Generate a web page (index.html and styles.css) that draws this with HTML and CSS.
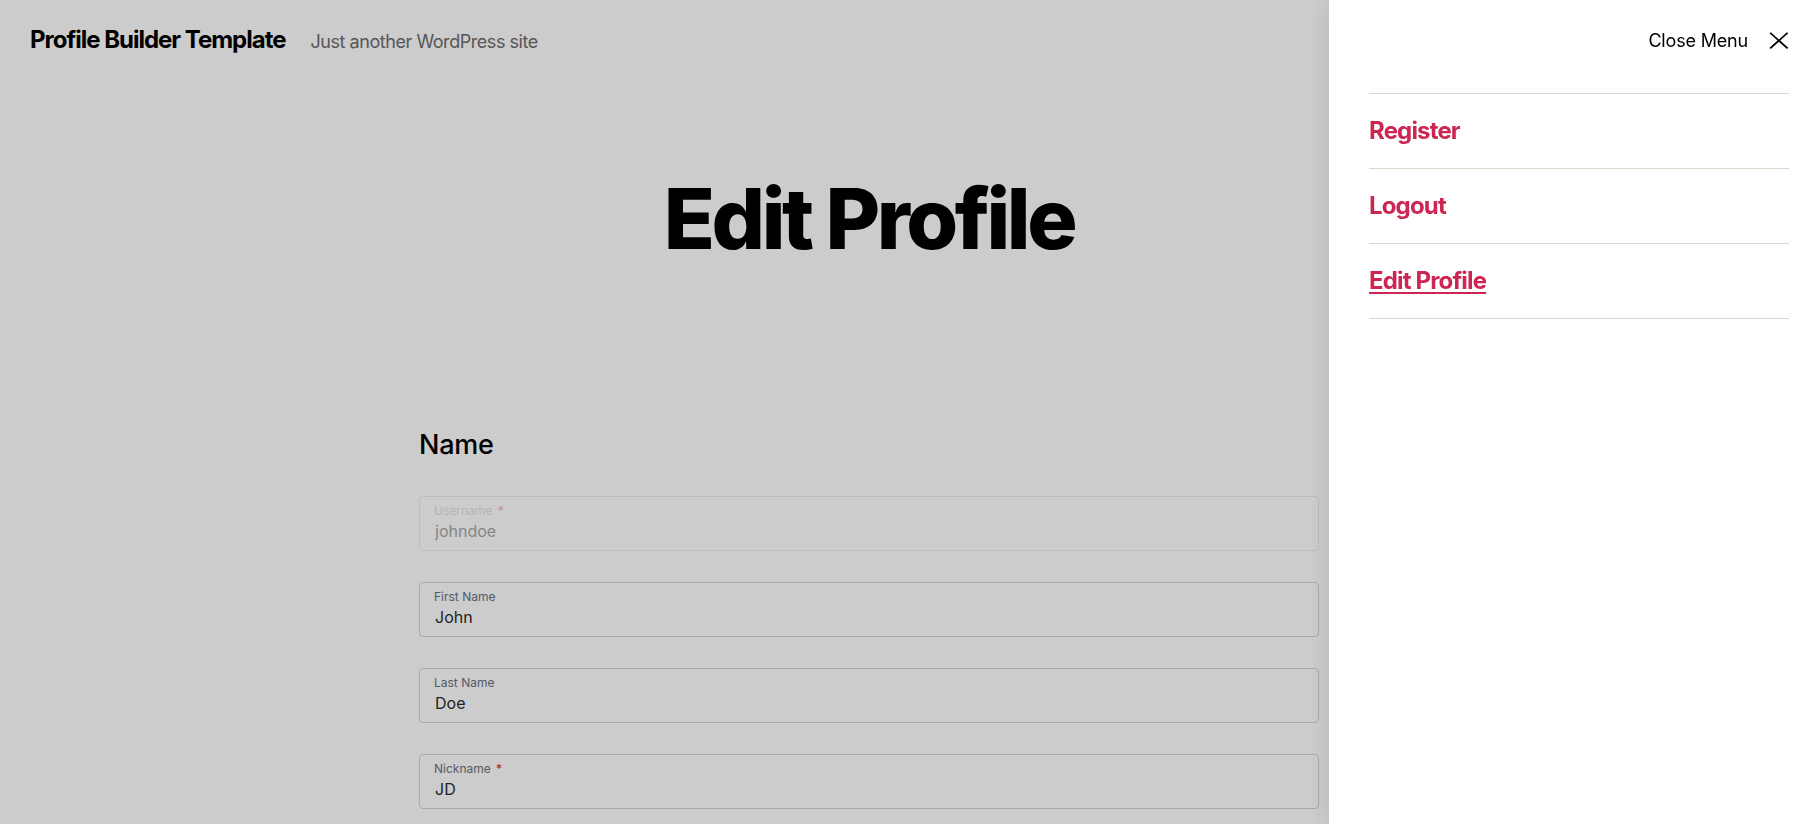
FILE: index.html
```html
<!DOCTYPE html>
<html>
<head>
	<title>Edit Profile – Profile Builder Template</title>
	<link rel="stylesheet" href="styles.css">
</head>
<body>
	<div class="page">
		<header class="site-header">
			<div class="site-title">Profile Builder Template</div>
			<div class="site-description">Just another WordPress site</div>
		</header>

		<main class="content">
			<h1 class="entry-title">Edit Profile</h1>

			<form class="profile-form">
				<h2 class="form-heading">Name</h2>
				<div class="field disabled">
					<label for="username">Username <span class="req">*</span></label>
					<input type="text" id="username" value="johndoe" disabled>
				</div>
				<div class="field">
					<label for="first_name">First Name</label>
					<input type="text" id="first_name" value="John">
				</div>
				<div class="field">
					<label for="last_name">Last Name</label>
					<input type="text" id="last_name" value="Doe">
				</div>
				<div class="field">
					<label for="nickname">Nickname <span class="req">*</span></label>
					<input type="text" id="nickname" value="JD">
				</div>
			</form>
		</main>
	</div>

	<!-- open menu modal -->
	<div class="menu-modal">
		<div class="menu-panel">
			<button class="close-toggle" type="button">
				<span>Close Menu</span>
				<svg width="20" height="18" viewBox="0 0 16 16" preserveAspectRatio="none"><polygon points="6.852 7.649 .399 1.195 1.445 .149 7.899 6.602 14.352 .149 15.399 1.195 8.945 7.649 15.399 14.102 14.352 15.149 7.899 8.695 1.445 15.149 .399 14.102"/></svg>
			</button>
			<ul class="modal-menu">
				<li><a href="#">Register</a></li>
				<li><a href="#">Logout</a></li>
				<li class="current"><a href="#">Edit Profile</a></li>
			</ul>
		</div>
	</div>
</body>
</html>
```

FILE: styles.css
```css
html, body {
	margin: 0;
	height: 100%;
	overflow: hidden;
}

body, input, button {
	font-family: Inter, "Noto Sans", sans-serif;
}

body {
	background: #fff;
	color: #000;
}

.page {
	padding-right: 65px;
}

.site-header {
	display: flex;
	align-items: baseline;
	padding: 28px 0 0 30px;
}

.site-title {
	font-size: 24px;
	line-height: 24px;
	font-weight: 700;
	letter-spacing: -0.042em;
}

.site-description {
	margin-left: 25px;
	font-size: 18px;
	line-height: 24px;
	letter-spacing: -0.025em;
	color: #6d6d6d;
}

.entry-title {
	margin: 123px 0 0;
	font-size: 84px;
	line-height: 84px;
	font-weight: 800;
	letter-spacing: -0.0415625em;
	text-align: center;
}

.profile-form {
	width: 900px;
	margin: 0 auto;
}

.form-heading {
	margin: 167px 0 34px;
	font-size: 27px;
	line-height: 34px;
	font-weight: 500;
	letter-spacing: -0.01em;
}

.field {
	box-sizing: border-box;
	height: 55px;
	margin-bottom: 31px;
	padding: 6px 14px 7px;
	border: 1px solid #d2d5dd;
	border-radius: 4px;
}

.field label {
	display: block;
	font-size: 12px;
	line-height: 16px;
	color: #6b7280;
}

.field input {
	display: block;
	width: 100%;
	padding: 0 1px;
	border: none;
	background: transparent;
	font-size: 16px;
	line-height: 24px;
	height: 24px;
	color: #2b2b2b;
	outline: none;
}

.req {
	margin-left: 2px;
	color: #dc2626;
}

.field.disabled {
	border-color: #ebebeb;
}

.field.disabled label {
	color: #e4e4e4;
}

.field.disabled .req {
	color: #f3b9b9;
}

.field.disabled input {
	color: #a8a8a8;
}

.menu-modal {
	position: fixed;
	top: 0;
	right: 0;
	bottom: 0;
	left: 0;
	display: flex;
	justify-content: flex-end;
	background: rgba(0, 0, 0, 0.2);
}

.menu-panel {
	box-sizing: border-box;
	width: 474px;
	padding: 32px 14px 0 40px;
	background: #fff;
	box-shadow: 0 0 24px rgba(0, 0, 0, 0.12);
}

.close-toggle {
	display: flex;
	align-items: center;
	margin: 0 0 0 auto;
	padding: 0;
	border: none;
	background: none;
	font-size: 18px;
	line-height: 18px;
	letter-spacing: -0.01em;
	color: #000;
}

.close-toggle svg {
	margin-left: 21px;
	fill: #000;
}

.modal-menu {
	margin: 43px 0 0;
	padding: 0;
	list-style: none;
	border-top: 1px solid #dcd7ca;
}

.modal-menu li {
	border-bottom: 1px solid #dcd7ca;
}

.modal-menu a {
	display: block;
	padding: 22px 0 22px;
	font-size: 24px;
	line-height: 30px;
	font-weight: 700;
	letter-spacing: -0.035em;
	color: #cd2653;
	text-decoration: none;
}

.modal-menu .current a {
	text-decoration: underline;
	text-decoration-thickness: 2px;
	text-underline-offset: 3px;
}
```
